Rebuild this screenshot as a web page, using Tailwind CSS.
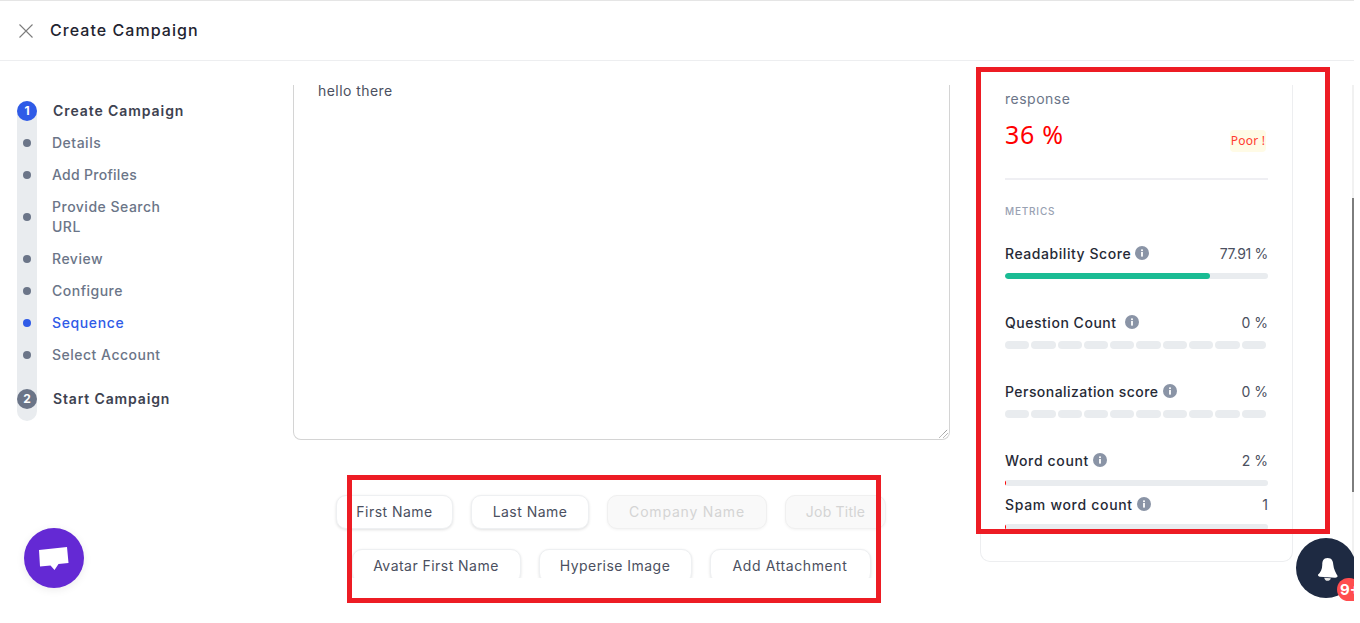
<!DOCTYPE html>
<html lang="en">
<head>
<meta charset="utf-8">
<title>Create Campaign</title>
<script src="https://cdn.jsdelivr.net/npm/@tailwindcss/browser@4"></script>
</head>
<body class="bg-white overflow-hidden">
<div class="relative w-[1354px] h-[623px] overflow-hidden bg-white font-['Inter','Liberation_Sans',sans-serif]">
  <header class="h-[61px] flex items-center gap-[16px] pl-[18px] border-t border-t-[#e5e5e5] border-b border-b-[#edeef0]">
    <svg class="w-4 h-4 text-[#7c7c7c]" viewBox="0 0 16 16" fill="none" stroke="currentColor" stroke-width="1.1"><path d="M1.5 1.5 14.5 14.5M14.5 1.5 1.5 14.5"/></svg>
    <h1 class="text-[16px] leading-6 mb-[2px] font-medium text-[#1f2430] tracking-[1.05px]">Create Campaign</h1>
  </header>
  <main class="flex h-[562px]">
    <nav class="w-[293px] pl-[17px] pt-[40px] shrink-0">
      <ol class="text-[14px] leading-5 font-medium text-[#6b7588] tracking-[0.5px]">
        <li class="flex h-[26px]">
          <span class="w-5 bg-[#e9ecef] rounded-t-full"><span class="flex w-5 h-5 rounded-full bg-[#2f5be7] text-white items-center justify-center text-[12px] font-bold tracking-normal">1</span></span>
          <span class="ml-4 font-semibold text-[#3d4250] tracking-[0.92px]">Create Campaign</span>
        </li>
        <li class="flex h-[32px] items-center"><span class="w-5 h-full bg-[#e9ecef] flex items-center justify-center"><span class="w-2 h-2 rounded-full bg-[#6b7588]"></span></span><span class="ml-[15px]">Details</span></li>
        <li class="flex h-[32px] items-center"><span class="w-5 h-full bg-[#e9ecef] flex items-center justify-center"><span class="w-2 h-2 rounded-full bg-[#6b7588]"></span></span><span class="ml-[15px] tracking-[0.28px]">Add Profiles</span></li>
        <li class="flex h-[52px] items-center"><span class="w-5 h-full bg-[#e9ecef] flex items-center justify-center"><span class="w-2 h-2 rounded-full bg-[#6b7588]"></span></span><span class="ml-[15px] w-[125px]">Provide Search URL</span></li>
        <li class="flex h-[32px] items-center"><span class="w-5 h-full bg-[#e9ecef] flex items-center justify-center"><span class="w-2 h-2 rounded-full bg-[#6b7588]"></span></span><span class="ml-[15px]">Review</span></li>
        <li class="flex h-[32px] items-center"><span class="w-5 h-full bg-[#e9ecef] flex items-center justify-center"><span class="w-2 h-2 rounded-full bg-[#6b7588]"></span></span><span class="ml-[15px]">Configure</span></li>
        <li class="flex h-[32px] items-center"><span class="w-5 h-full bg-[#e9ecef] flex items-center justify-center"><span class="w-2 h-2 rounded-full bg-[#2f5be7]"></span></span><span class="ml-[15px] text-[#2f5be7] tracking-[0.62px]">Sequence</span></li>
        <li class="flex h-[32px] items-center"><span class="w-5 h-full bg-[#e9ecef] flex items-center justify-center"><span class="w-2 h-2 rounded-full bg-[#6b7588]"></span></span><span class="ml-[15px]">Select Account</span></li>
        <li class="flex h-[50px]">
          <span class="w-5 h-full bg-[#e9ecef] rounded-b-[10px] pt-[18px]"><span class="flex w-5 h-5 rounded-full bg-[#6b7588] text-white items-center justify-center text-[12px] font-bold tracking-normal">2</span></span>
          <span class="ml-4 pt-[18px] font-semibold text-[#3d4250] tracking-[0.85px]">Start Campaign</span>
        </li>
      </ol>
    </nav>

    <section class="w-[657px] shrink-0 mt-[24px] h-[493px] overflow-hidden">
      <div class="h-[355px] border border-t-0 border-[#d4d4d4] rounded-b-[8px] pl-[24px] relative">
        <p class="text-[14px] leading-[12px] text-[#4b5060] tracking-[0.45px]">hello there</p>
        <svg class="absolute right-[1px] bottom-[1px] w-[9px] h-[9px] text-[#555]" viewBox="0 0 9 9" fill="none" stroke="currentColor" stroke-width="0.8" stroke-dasharray="1 0.6"><path d="M0.5 8.5 8.5 0.5M4.5 8.5 8.5 4.5"/></svg>
      </div>
      <div class="mt-[55px] w-[636px] flex flex-wrap justify-center gap-x-[18px] gap-y-[20px] text-[14px] leading-5 tracking-[0.46px]">
        <button class="h-[34px] w-[117px] rounded-[10px] border border-[#eef0f2] bg-white text-[#4b5060] shadow-[0_1px_3px_rgba(0,0,0,0.12)]">First Name</button>
        <button class="h-[34px] w-[118px] rounded-[10px] border border-[#eef0f2] bg-white text-[#4b5060] shadow-[0_1px_3px_rgba(0,0,0,0.12)]">Last Name</button>
        <button class="h-[34px] w-[160px] rounded-[10px] border border-[#f0f0f0] bg-[#f9f9f9] text-[#d4d4d4] shadow-[0_1px_3px_rgba(0,0,0,0.05)] tracking-[0.8px]">Company Name</button>
        <button class="h-[34px] w-[101px] rounded-[10px] border border-[#f0f0f0] bg-[#f9f9f9] text-[#d4d4d4] shadow-[0_1px_3px_rgba(0,0,0,0.05)] tracking-[0.2px]">Job Title</button>
        <button class="h-[34px] w-[169px] rounded-[10px] border border-[#eef0f2] bg-white text-[#4b5060] shadow-[0_1px_3px_rgba(0,0,0,0.12)]">Avatar First Name</button>
        <button class="h-[34px] w-[153px] rounded-[10px] border border-[#eef0f2] bg-white text-[#4b5060] shadow-[0_1px_3px_rgba(0,0,0,0.12)]">Hyperise Image</button>
        <button class="h-[34px] w-[161px] rounded-[10px] border border-[#eef0f2] bg-white text-[#4b5060] shadow-[0_1px_3px_rgba(0,0,0,0.12)] tracking-[0.6px]">Add Attachment</button>
      </div>
    </section>

    <aside class="ml-[30px] w-[313px] shrink-0 mt-[24px] h-[477px] border border-t-0 border-[#edeef0] rounded-b-[10px] pl-[24px] pr-[24px] overflow-hidden">
      <p class="text-[14px] leading-5 mt-[4px] text-[#6b7588] tracking-[0.5px]">response</p>
      <div class="flex items-end justify-between mt-[8px] h-[34px]">
        <span class="font-['Noto_Sans',sans-serif] text-[25px] leading-[34px] text-[#ff0000] tracking-[0.7px]">36 %</span>
        <span class="mr-[2px] mb-[-1px] w-[36px] h-[22px] rounded-[4px] bg-[#fffbe6] text-[#ff3b30] text-[12px] leading-[22px] text-center font-['Noto_Sans',sans-serif] whitespace-nowrap tracking-[0.2px]">Poor !</span>
      </div>
      <div class="mt-[27px] h-[2px] bg-[#efeff3]"></div>
      <p class="mt-[25px] text-[10px] leading-3 font-medium tracking-[0.8px] text-[#98a1b2]">METRICS</p>

      <div class="mt-[26px] flex items-center justify-between h-5 text-[14px]"><span class="flex items-center gap-[4px] font-medium text-[#262a36] tracking-[0.55px]">Readability Score
        <svg class="w-[14px] h-[14px]" viewBox="0 0 14 14"><circle cx="7" cy="7" r="7" fill="#8a94a6"/><rect x="6.1" y="6" width="1.8" height="4.6" fill="#fff"/><rect x="6.1" y="3.4" width="1.8" height="1.7" fill="#fff"/></svg></span><span class="text-[#4b5060] tracking-[-0.3px]">77.91 %</span></div>
      <div class="mt-[10px] h-[6px] rounded-full bg-[#e9ecef] overflow-hidden"><div class="h-full w-[78%] bg-[#1abc94] rounded-full"></div></div>

      <div class="mt-[33px] flex items-center justify-between h-5 text-[14px]"><span class="flex items-center gap-[8px] font-medium text-[#262a36] tracking-[0.53px]">Question Count
        <svg class="w-[14px] h-[14px]" viewBox="0 0 14 14"><circle cx="7" cy="7" r="7" fill="#8a94a6"/><rect x="6.1" y="6" width="1.8" height="4.6" fill="#fff"/><rect x="6.1" y="3.4" width="1.8" height="1.7" fill="#fff"/></svg></span><span class="text-[#4b5060]">0 %</span></div>
      <div class="mt-[9px] flex gap-[2px] w-[261px] h-[8px]">
        <span class="flex-1 rounded-full bg-[#e9ecef]"></span><span class="flex-1 rounded-full bg-[#e9ecef]"></span><span class="flex-1 rounded-full bg-[#e9ecef]"></span><span class="flex-1 rounded-full bg-[#e9ecef]"></span><span class="flex-1 rounded-full bg-[#e9ecef]"></span><span class="flex-1 rounded-full bg-[#e9ecef]"></span><span class="flex-1 rounded-full bg-[#e9ecef]"></span><span class="flex-1 rounded-full bg-[#e9ecef]"></span><span class="flex-1 rounded-full bg-[#e9ecef]"></span><span class="flex-1 rounded-full bg-[#e9ecef]"></span>
      </div>

      <div class="mt-[32px] flex items-center justify-between h-5 text-[14px]"><span class="flex items-center gap-[4px] font-medium text-[#262a36] tracking-[0.45px]">Personalization score
        <svg class="w-[14px] h-[14px]" viewBox="0 0 14 14"><circle cx="7" cy="7" r="7" fill="#8a94a6"/><rect x="6.1" y="6" width="1.8" height="4.6" fill="#fff"/><rect x="6.1" y="3.4" width="1.8" height="1.7" fill="#fff"/></svg></span><span class="text-[#4b5060]">0 %</span></div>
      <div class="mt-[9px] flex gap-[2px] w-[261px] h-[8px]">
        <span class="flex-1 rounded-full bg-[#e9ecef]"></span><span class="flex-1 rounded-full bg-[#e9ecef]"></span><span class="flex-1 rounded-full bg-[#e9ecef]"></span><span class="flex-1 rounded-full bg-[#e9ecef]"></span><span class="flex-1 rounded-full bg-[#e9ecef]"></span><span class="flex-1 rounded-full bg-[#e9ecef]"></span><span class="flex-1 rounded-full bg-[#e9ecef]"></span><span class="flex-1 rounded-full bg-[#e9ecef]"></span><span class="flex-1 rounded-full bg-[#e9ecef]"></span><span class="flex-1 rounded-full bg-[#e9ecef]"></span>
      </div>

      <div class="mt-[32px] flex items-center justify-between h-5 text-[14px]"><span class="flex items-center gap-[4px] font-medium text-[#262a36] tracking-[0.65px]">Word count
        <svg class="w-[14px] h-[14px]" viewBox="0 0 14 14"><circle cx="7" cy="7" r="7" fill="#8a94a6"/><rect x="6.1" y="6" width="1.8" height="4.6" fill="#fff"/><rect x="6.1" y="3.4" width="1.8" height="1.7" fill="#fff"/></svg></span><span class="text-[#4b5060]">2 %</span></div>
      <div class="mt-[10px] h-[6px] rounded-full bg-[#e9ecef] overflow-hidden"><div class="h-full w-[1px] bg-[#ff0000]"></div></div>

      <div class="mt-[8px] flex items-center justify-between h-5 text-[14px]"><span class="flex items-center gap-[4px] font-medium text-[#262a36] tracking-[0.69px]">Spam word count
        <svg class="w-[14px] h-[14px]" viewBox="0 0 14 14"><circle cx="7" cy="7" r="7" fill="#8a94a6"/><rect x="6.1" y="6" width="1.8" height="4.6" fill="#fff"/><rect x="6.1" y="3.4" width="1.8" height="1.7" fill="#fff"/></svg></span><span class="text-[#4b5060]">1</span></div>
      <div class="mt-[10px] h-[6px] rounded-full bg-[#e9ecef] overflow-hidden"><div class="h-full w-[1px] bg-[#ff0000]"></div></div>
    </aside>

    <div class="ml-[59px] w-[2px] mt-[24px] h-[500px] bg-[#f1f1f1] shrink-0"><div class="mt-[113px] h-[294px] bg-[#7d7d7d]"></div></div>
  </main>

  <div class="absolute left-[976px] top-[67px] w-[354px] h-[467px] border-[5px] border-[#ed1c24]"></div>
  <div class="absolute left-[347px] top-[475px] w-[534px] h-[128px] border-[5px] border-[#ed1c24]"></div>

  <button class="absolute left-[24px] top-[528px] w-[60px] h-[60px] rounded-full bg-[#6429d4] flex items-center justify-center shadow-[0_2px_8px_rgba(0,0,0,0.08)]" aria-label="Chat">
    <svg class="w-[30px] h-[26px]" viewBox="0 0 30 26"><path d="M0 5 28 2 29.500 18 19.500 19 15.500 25 11.500 20.500 1 21.500Z" fill="#fff"/></svg>
  </button>
  <button class="absolute left-[1296px] top-[538px] w-[60px] h-[60px] rounded-full bg-[#1e2a42] flex items-center justify-center" aria-label="Notifications">
    <svg class="w-[23px] h-[25px] ml-[4px] mt-[2px]" viewBox="0 0 24 26"><path d="M11 1C6.500 1 5.500 4.500 5.500 8c0 5-2 8-4.500 10.500 0 1 .8 1.700 2 2l16 1c1.200 0 2.500-.8 2.500-1.800C19.500 16 17.500 13 17 8 16.700 4 15.500 1 11 1Z" fill="#fff"/><path d="M7.500 21.500l7 .5c-.7 2-2 2.800-3.700 2.800S8 23.500 7.500 21.500Z" fill="#e8e8e8"/></svg>
  </button>
  <span class="absolute left-[1337px] top-[578px] w-[24px] h-[23px] rounded-t-full rounded-bl-full bg-[#ff4d4f] text-white text-[15px] leading-[24px] font-bold pl-[3px]">9+</span>
</div>
</body>
</html>
